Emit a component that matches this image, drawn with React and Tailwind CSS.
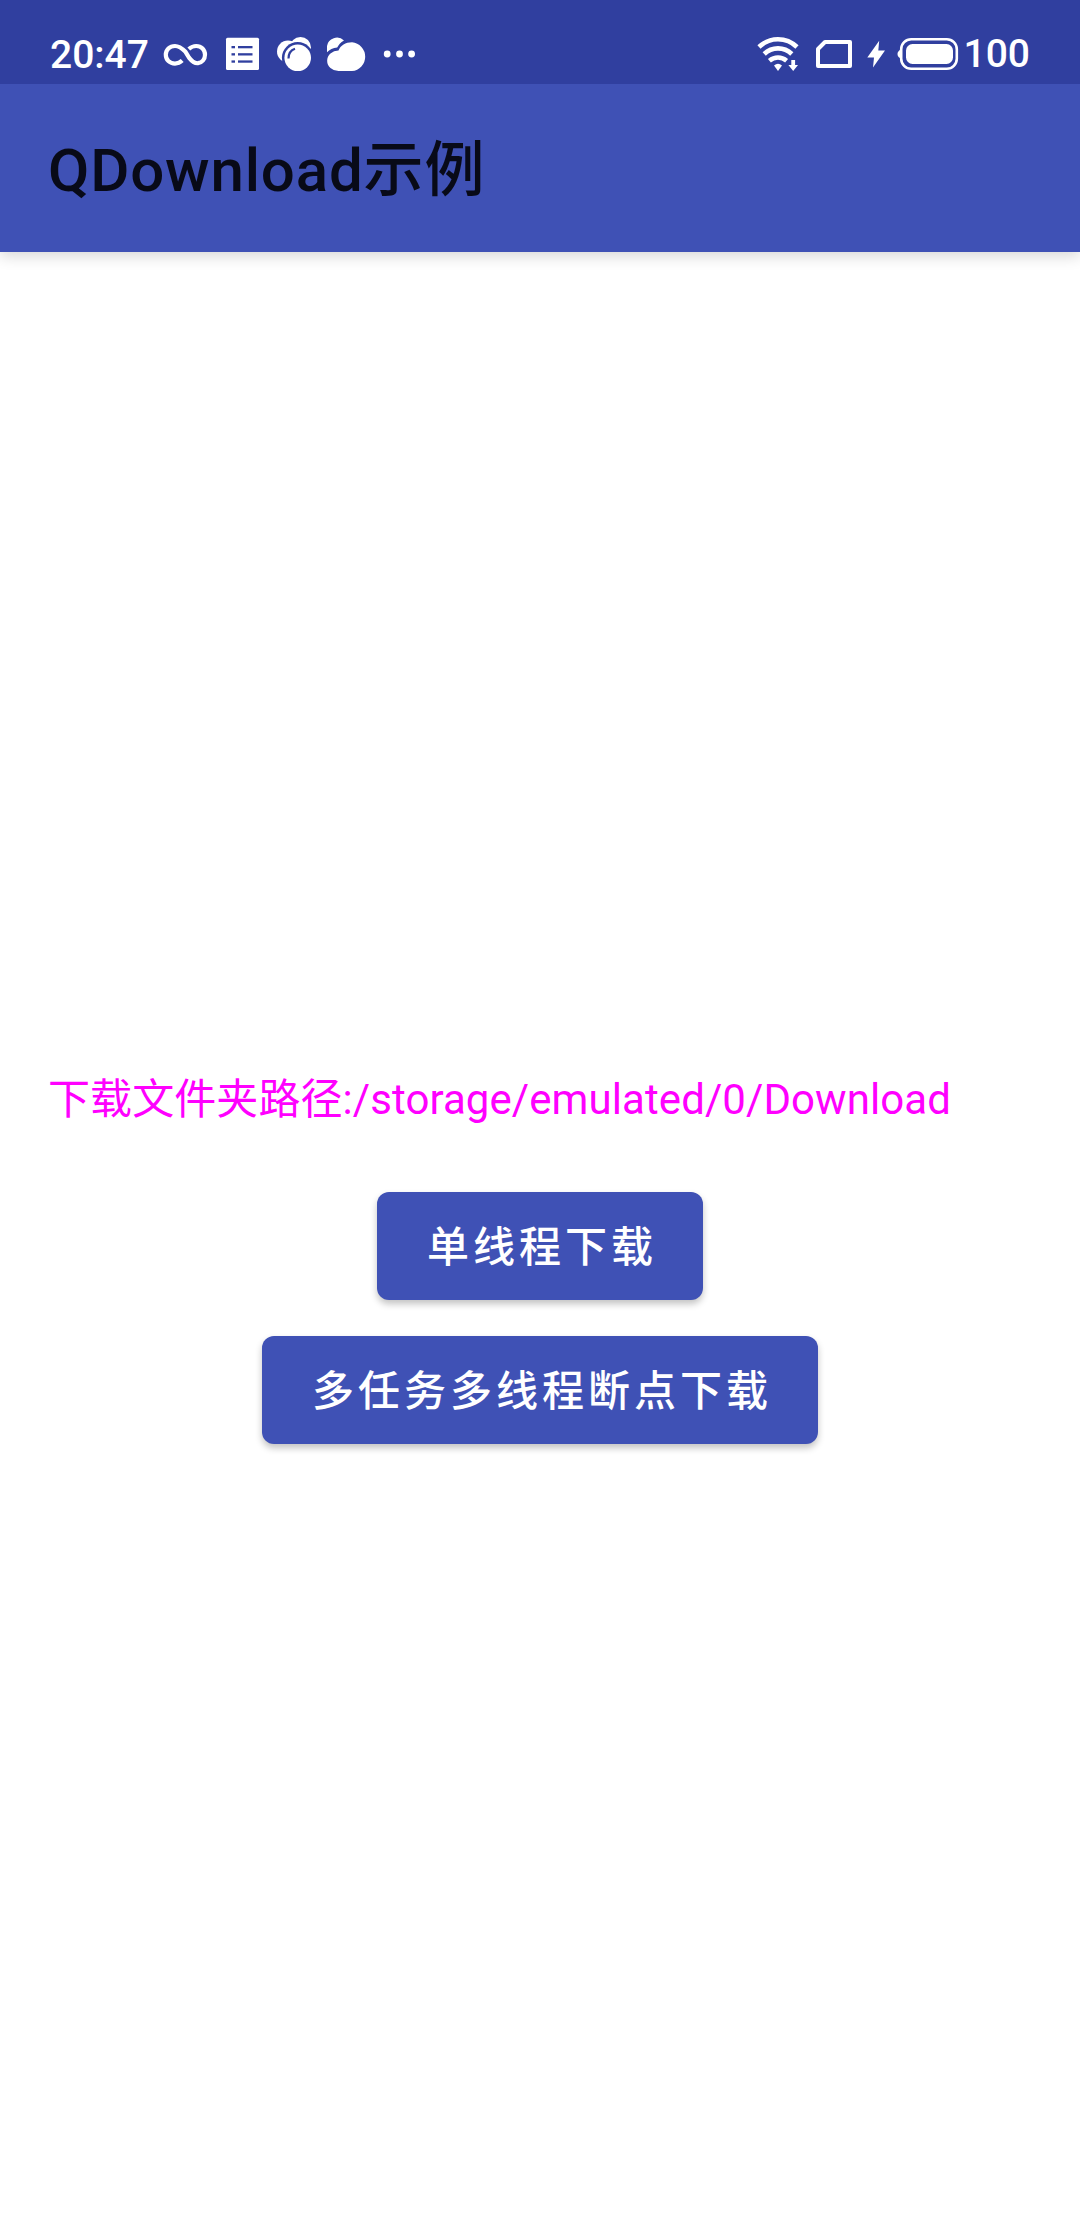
function Infinity() {
  return (
    <svg className="relative top-px ml-[12px] h-[26px] w-[48px]" viewBox="161 42 48 26" fill="none" stroke="#fff" strokeWidth="4.200">
      <path d="M182.2 60.600 C179.900 62.800 177.600 63.600 175 63.600 C169.600 63.600 165.800 59.800 165.800 54.800 C165.800 49.800 169.600 46 175 46 C179.500 46 182 48.300 185.500 51.800 L189 57.600 C192 61.400 195 63.600 198 63.200 C202 62.600 205 59.200 205 54.800 C205 49.800 201.400 46 196.200 46 C193.300 46 191.200 46.900 188.800 49" />
    </svg>
  );
}

function ListIcon() {
  return (
    <svg className="ml-[15px] h-[36px] w-[37px]" viewBox="224 36 37 36">
      <rect x="226" y="37.700" width="33" height="32.400" rx="1.500" fill="#fff" />
      <g fill="#303f9f">
        <rect x="231.500" y="46" width="3.500" height="2.300" />
        <rect x="238" y="46" width="14.500" height="2.300" />
        <rect x="231.500" y="53.200" width="3.500" height="2.300" />
        <rect x="238" y="53.200" width="14.500" height="2.300" />
        <rect x="231.500" y="60.400" width="3.500" height="2.300" />
        <rect x="238" y="60.400" width="14.500" height="2.300" />
      </g>
    </svg>
  );
}

function Bubbles() {
  return (
    <svg className="ml-[14px] h-[36px] w-[37px]" viewBox="275 36 37 36">
      <circle cx="300.500" cy="47.500" r="10.500" fill="#fff" />
      <circle cx="288" cy="51.500" r="11" fill="#fff" />
      <circle cx="297.700" cy="57.800" r="15.800" fill="#303f9f" />
      <circle cx="297.700" cy="57.800" r="13.300" fill="#fff" />
      <path d="M288.500 58.500 C288.500 53.500 290.500 50.200 295 48.700" fill="none" stroke="#303f9f" strokeWidth="2.200" />
    </svg>
  );
}

function Clouds() {
  return (
    <svg className="ml-[13px] h-[36px] w-[44px]" viewBox="325 36 44 36">
      <path d="M327 50 V46 A10 9.500 0 0 1 344 40.500 C340.500 42.500 338.500 45 337.200 47.600 C333 48 329.500 49.600 327 52.300 Z" fill="#fff" />
      <path d="M338.500 71 A11.300 10.200 0 0 1 338.500 50.500 C340.500 45.500 345.500 42.300 352 42.300 A14.400 14.400 0 0 1 352 71 Z" fill="#fff" />
    </svg>
  );
}

function Dots() {
  return (
    <svg className="ml-[13px] h-[10px] w-[36px]" viewBox="382 49 36 10" fill="#fff">
      <circle cx="387.200" cy="54" r="3.400" />
      <circle cx="399.500" cy="54" r="3.400" />
      <circle cx="411.600" cy="54" r="3.400" />
    </svg>
  );
}

function Wifi() {
  return (
    <svg className="h-[36px] w-[46px]" viewBox="755 36 46 36" fill="none" stroke="#fff" strokeWidth="4.600">
      <path d="M759 47 C769.800 36.700 786.200 36.700 797 47" />
      <path d="M764.200 54 C772 46.500 784 46.500 791.800 54" />
      <path d="M769.400 60.700 C774.500 56.500 781.500 56.500 786.600 60.700" />
      <path d="M774 65.500 Q778 62 782 65.500 L778 71 Z" fill="#fff" stroke="none" />
      <path d="M791.300 60 H795.100 V65 H798 L793.200 71 L788.400 65 H791.300 Z" fill="#fff" stroke="none" />
    </svg>
  );
}

function Sim() {
  return (
    <svg className="ml-[13px] h-[32px] w-[40px]" viewBox="814 38 40 32">
      <path d="M825 42 H850 V66 H818 V49 Z" fill="none" stroke="#fff" strokeWidth="4" strokeLinejoin="round" />
    </svg>
  );
}

function Bolt() {
  return (
    <svg className="ml-[12px] h-[30px] w-[20px]" viewBox="866 39 20 30">
      <path d="M879.200 40.800 L867.300 57.500 H874 L873 67.500 L885 50.500 H878.300 Z" fill="#fff" />
    </svg>
  );
}

function Battery() {
  return (
    <svg className="ml-[10px] h-[36px] w-[64px]" viewBox="896 36 64 36">
      <path d="M901 49.500 Q897.500 51 897.500 54 Q897.500 57 901 58.500 Z" fill="#fff" />
      <rect x="901.200" y="39.200" width="55.600" height="29.600" rx="10" fill="none" stroke="#fff" strokeWidth="2.600" />
      <rect x="906" y="44" width="47" height="20" rx="6.500" fill="#fff" />
    </svg>
  );
}

function ActionButton({ children }) {
  return (
    <button className="h-[108px] rounded-[12px] bg-[#3f51b5] pt-[3px] pr-[46px] pl-[50px] text-[42px] font-medium leading-none tracking-[4px] text-white shadow-[0_4px_7px_rgba(0,0,0,0.24)]">
      {children}
    </button>
  );
}

export default function App() {
  return (
    <div className="flex h-[2232px] w-[1080px] flex-col bg-white font-['Roboto','Noto_Sans_CJK_SC',sans-serif]">
      <div className="relative z-10 flex h-[84px] items-center justify-between bg-[#303f9f] pt-6 pr-[50px] pl-[50px] text-[39px] leading-[60px] font-medium text-white">
        <div className="flex items-center">
          <span className="relative top-px">20:47</span>
          <Infinity />
          <ListIcon />
          <Bubbles />
          <Clouds />
          <Dots />
        </div>
        <div className="flex items-center">
          <Wifi />
          <Sim />
          <Bolt />
          <Battery />
          <span className="ml-[4px]">100</span>
        </div>
      </div>
      <header className="flex h-[168px] items-center bg-[#3f51b5] px-12 pt-[6px] shadow-[0_4px_14px_rgba(0,0,0,0.16)]">
        <h1 className="text-[60px] leading-[80px] font-medium tracking-[0.85px] text-black/87">QDownload示例</h1>
      </header>
      <main className="flex flex-col items-center pt-[818px]">
        <p className="w-full px-12 text-[42px] leading-[60px] tracking-[0.08px] text-[#ff00ff]">
          下载文件夹路径:/storage/emulated/0/Download
        </p>
        <div className="mt-[62px] flex flex-col items-center gap-9">
          <ActionButton>单线程下载</ActionButton>
          <ActionButton>多任务多线程断点下载</ActionButton>
        </div>
      </main>
    </div>
  );
}
